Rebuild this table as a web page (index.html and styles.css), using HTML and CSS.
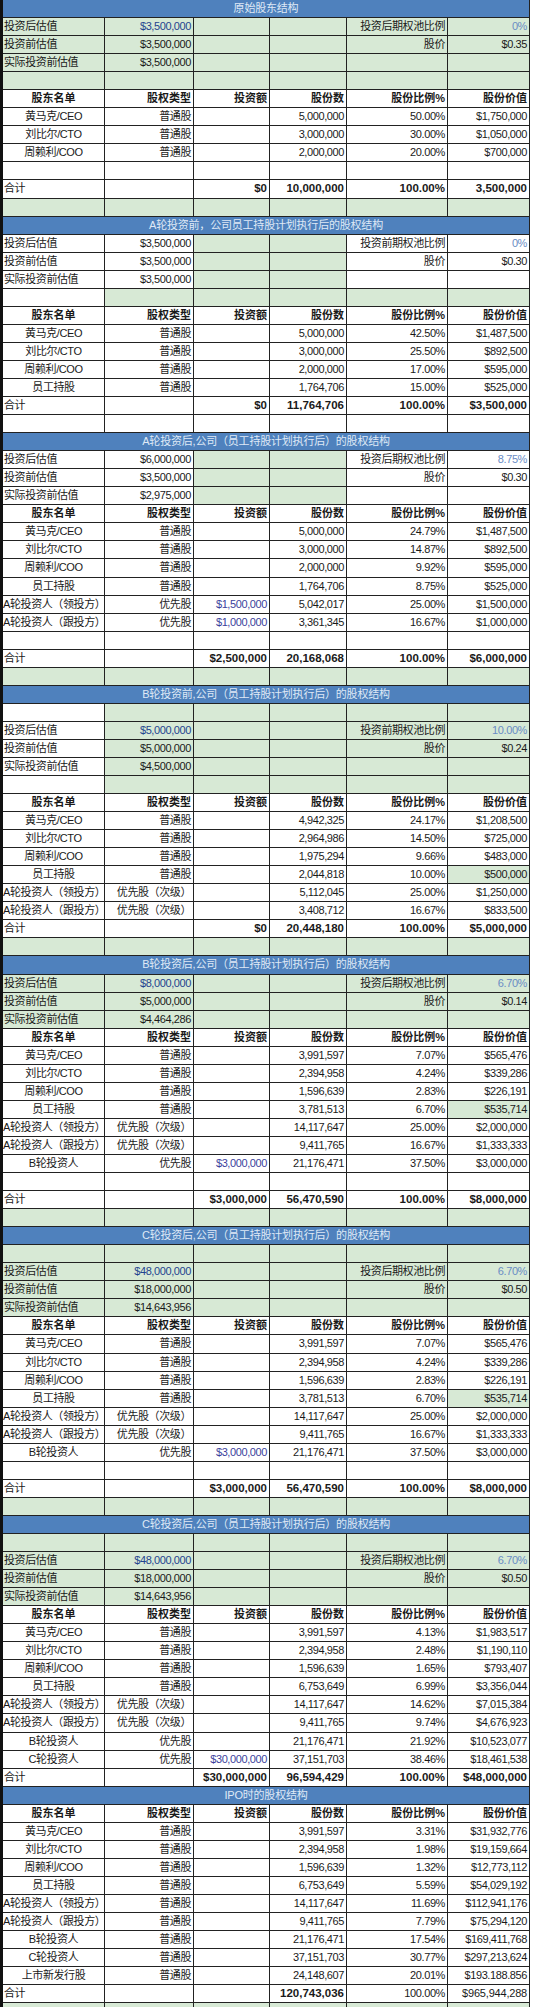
FILE: index.html
```html
<!DOCTYPE html>
<html lang="zh">
<head>
<meta charset="utf-8">
<title>股权结构</title>
<link rel="stylesheet" href="styles.css">
</head>
<body>
<div class="sheet">

<!-- Section 1 -->
<div class="title">原始股东结构</div>
<div class="row g"><span class="l">投资后估值</span><span class="db">$3,500,000</span><span></span><span></span><span>投资后期权池比例</span><span class="lb">0%</span></div>
<div class="row g"><span class="l">投资前估值</span><span>$3,500,000</span><span></span><span></span><span>股价</span><span>$0.35</span></div>
<div class="row g"><span class="l">实际投资前估值</span><span>$3,500,000</span><span></span><span></span><span></span><span></span></div>
<div class="row g"><span></span><span></span><span></span><span></span><span></span><span></span></div>
<div class="row hd"><span class="c">股东名单</span><span>股权类型</span><span>投资额</span><span>股份数</span><span>股份比例%</span><span>股份价值</span></div>
<div class="row"><span class="c">黄马克/CEO</span><span>普通股</span><span></span><span>5,000,000</span><span>50.00%</span><span>$1,750,000</span></div>
<div class="row"><span class="c">刘比尔/CTO</span><span>普通股</span><span></span><span>3,000,000</span><span>30.00%</span><span>$1,050,000</span></div>
<div class="row"><span class="c">周赖利/COO</span><span>普通股</span><span></span><span>2,000,000</span><span>20.00%</span><span>$700,000</span></div>
<div class="row"><span></span><span></span><span></span><span></span><span></span><span></span></div>
<div class="row tot"><span class="l">合计</span><span></span><span class="b">$0</span><span class="b">10,000,000</span><span class="b">100.00%</span><span class="b">3,500,000</span></div>
<div class="row g"><span></span><span></span><span></span><span></span><span></span><span></span></div>

<!-- Section 2 -->
<div class="title">A轮投资前，公司员工持股计划执行后的股权结构</div>
<div class="row"><span class="l">投资后估值</span><span>$3,500,000</span><span class="g"></span><span class="g"></span><span>投资前期权池比例</span><span class="lb">0%</span></div>
<div class="row"><span class="l">投资前估值</span><span>$3,500,000</span><span class="g"></span><span class="g"></span><span>股价</span><span>$0.30</span></div>
<div class="row"><span class="l">实际投资前估值</span><span>$3,500,000</span><span class="g"></span><span class="g"></span><span></span><span></span></div>
<div class="row g"><span class="w"></span><span></span><span></span><span></span><span></span><span></span></div>
<div class="row hd"><span class="c">股东名单</span><span>股权类型</span><span>投资额</span><span>股份数</span><span>股份比例%</span><span>股份价值</span></div>
<div class="row"><span class="c">黄马克/CEO</span><span>普通股</span><span></span><span>5,000,000</span><span>42.50%</span><span>$1,487,500</span></div>
<div class="row"><span class="c">刘比尔/CTO</span><span>普通股</span><span></span><span>3,000,000</span><span>25.50%</span><span>$892,500</span></div>
<div class="row"><span class="c">周赖利/COO</span><span>普通股</span><span></span><span>2,000,000</span><span>17.00%</span><span>$595,000</span></div>
<div class="row"><span class="c">员工持股</span><span>普通股</span><span></span><span>1,764,706</span><span>15.00%</span><span>$525,000</span></div>
<div class="row tot"><span class="l">合计</span><span></span><span class="b">$0</span><span class="b">11,764,706</span><span class="b">100.00%</span><span class="b">$3,500,000</span></div>
<div class="row"><span></span><span></span><span></span><span></span><span></span><span></span></div>

<!-- Section 3 -->
<div class="title">A轮投资后,公司（员工持股计划执行后）的股权结构</div>
<div class="row"><span class="l">投资后估值</span><span>$6,000,000</span><span class="g"></span><span class="g"></span><span>投资后期权池比例</span><span class="lb">8.75%</span></div>
<div class="row"><span class="l">投资前估值</span><span>$3,500,000</span><span class="g"></span><span class="g"></span><span>股价</span><span>$0.30</span></div>
<div class="row"><span class="l">实际投资前估值</span><span>$2,975,000</span><span class="g"></span><span class="g"></span><span></span><span></span></div>
<div class="row hd"><span class="c">股东名单</span><span>股权类型</span><span>投资额</span><span>股份数</span><span>股份比例%</span><span>股份价值</span></div>
<div class="row"><span class="c">黄马克/CEO</span><span>普通股</span><span></span><span>5,000,000</span><span>24.79%</span><span>$1,487,500</span></div>
<div class="row"><span class="c">刘比尔/CTO</span><span>普通股</span><span></span><span>3,000,000</span><span>14.87%</span><span>$892,500</span></div>
<div class="row"><span class="c">周赖利/COO</span><span>普通股</span><span></span><span>2,000,000</span><span>9.92%</span><span>$595,000</span></div>
<div class="row"><span class="c">员工持股</span><span>普通股</span><span></span><span>1,764,706</span><span>8.75%</span><span>$525,000</span></div>
<div class="row"><span class="c">A轮投资人（领投方）</span><span>优先股</span><span class="pb">$1,500,000</span><span>5,042,017</span><span>25.00%</span><span>$1,500,000</span></div>
<div class="row"><span class="c">A轮投资人（跟投方）</span><span>优先股</span><span class="pb">$1,000,000</span><span>3,361,345</span><span>16.67%</span><span>$1,000,000</span></div>
<div class="row"><span></span><span></span><span></span><span></span><span></span><span></span></div>
<div class="row tot"><span class="l">合计</span><span></span><span class="b">$2,500,000</span><span class="b">20,168,068</span><span class="b">100.00%</span><span class="b">$6,000,000</span></div>
<div class="row g"><span></span><span></span><span></span><span></span><span></span><span></span></div>

<!-- Section 4 -->
<div class="title">B轮投资前,公司（员工持股计划执行后）的股权结构</div>
<div class="row g"><span class="w"></span><span></span><span></span><span></span><span></span><span></span></div>
<div class="row g"><span class="l w">投资后估值</span><span class="db">$5,000,000</span><span></span><span></span><span>投资前期权池比例</span><span class="lb">10.00%</span></div>
<div class="row g"><span class="l w">投资前估值</span><span>$5,000,000</span><span></span><span></span><span>股价</span><span>$0.24</span></div>
<div class="row g"><span class="l w">实际投资前估值</span><span>$4,500,000</span><span></span><span></span><span></span><span></span></div>
<div class="row g"><span class="w"></span><span></span><span></span><span></span><span></span><span></span></div>
<div class="row hd"><span class="c">股东名单</span><span>股权类型</span><span>投资额</span><span>股份数</span><span>股份比例%</span><span>股份价值</span></div>
<div class="row"><span class="c">黄马克/CEO</span><span>普通股</span><span></span><span>4,942,325</span><span>24.17%</span><span>$1,208,500</span></div>
<div class="row"><span class="c">刘比尔/CTO</span><span>普通股</span><span></span><span>2,964,986</span><span>14.50%</span><span>$725,000</span></div>
<div class="row"><span class="c">周赖利/COO</span><span>普通股</span><span></span><span>1,975,294</span><span>9.66%</span><span>$483,000</span></div>
<div class="row"><span class="c">员工持股</span><span>普通股</span><span></span><span>2,044,818</span><span>10.00%</span><span class="g">$500,000</span></div>
<div class="row"><span class="c">A轮投资人（领投方）</span><span>优先股（次级）</span><span></span><span>5,112,045</span><span>25.00%</span><span>$1,250,000</span></div>
<div class="row"><span class="c">A轮投资人（跟投方）</span><span>优先股（次级）</span><span></span><span>3,408,712</span><span>16.67%</span><span>$833,500</span></div>
<div class="row tot"><span class="l">合计</span><span></span><span class="b">$0</span><span class="b">20,448,180</span><span class="b">100.00%</span><span class="b">$5,000,000</span></div>
<div class="row g"><span></span><span></span><span></span><span></span><span></span><span></span></div>

<!-- Section 5 -->
<div class="title">B轮投资后,公司（员工持股计划执行后）的股权结构</div>
<div class="row g"><span class="l">投资后估值</span><span class="db">$8,000,000</span><span></span><span></span><span>投资后期权池比例</span><span class="lb">6.70%</span></div>
<div class="row g"><span class="l">投资前估值</span><span>$5,000,000</span><span></span><span></span><span>股价</span><span>$0.14</span></div>
<div class="row g"><span class="l">实际投资前估值</span><span>$4,464,286</span><span></span><span></span><span></span><span></span></div>
<div class="row hd"><span class="c">股东名单</span><span>股权类型</span><span>投资额</span><span>股份数</span><span>股份比例%</span><span>股份价值</span></div>
<div class="row"><span class="c">黄马克/CEO</span><span>普通股</span><span></span><span>3,991,597</span><span>7.07%</span><span>$565,476</span></div>
<div class="row"><span class="c">刘比尔/CTO</span><span>普通股</span><span></span><span>2,394,958</span><span>4.24%</span><span>$339,286</span></div>
<div class="row"><span class="c">周赖利/COO</span><span>普通股</span><span></span><span>1,596,639</span><span>2.83%</span><span>$226,191</span></div>
<div class="row"><span class="c">员工持股</span><span>普通股</span><span></span><span>3,781,513</span><span>6.70%</span><span class="g">$535,714</span></div>
<div class="row"><span class="c">A轮投资人（领投方）</span><span>优先股（次级）</span><span></span><span>14,117,647</span><span>25.00%</span><span>$2,000,000</span></div>
<div class="row"><span class="c">A轮投资人（跟投方）</span><span>优先股（次级）</span><span></span><span>9,411,765</span><span>16.67%</span><span>$1,333,333</span></div>
<div class="row"><span class="c">B轮投资人</span><span>优先股</span><span class="pb">$3,000,000</span><span>21,176,471</span><span>37.50%</span><span>$3,000,000</span></div>
<div class="row"><span></span><span></span><span></span><span></span><span></span><span></span></div>
<div class="row tot"><span class="l">合计</span><span></span><span class="b">$3,000,000</span><span class="b">56,470,590</span><span class="b">100.00%</span><span class="b">$8,000,000</span></div>
<div class="row g"><span></span><span></span><span></span><span></span><span></span><span></span></div>

<!-- Section 6 -->
<div class="title">C轮投资后,公司（员工持股计划执行后）的股权结构</div>
<div class="row g"><span></span><span></span><span></span><span></span><span></span><span></span></div>
<div class="row g"><span class="l">投资后估值</span><span class="db">$48,000,000</span><span></span><span></span><span>投资后期权池比例</span><span class="lb">6.70%</span></div>
<div class="row g"><span class="l">投资前估值</span><span>$18,000,000</span><span></span><span></span><span>股价</span><span>$0.50</span></div>
<div class="row g"><span class="l">实际投资前估值</span><span>$14,643,956</span><span></span><span></span><span></span><span></span></div>
<div class="row hd"><span class="c">股东名单</span><span>股权类型</span><span>投资额</span><span>股份数</span><span>股份比例%</span><span>股份价值</span></div>
<div class="row"><span class="c">黄马克/CEO</span><span>普通股</span><span></span><span>3,991,597</span><span>7.07%</span><span>$565,476</span></div>
<div class="row"><span class="c">刘比尔/CTO</span><span>普通股</span><span></span><span>2,394,958</span><span>4.24%</span><span>$339,286</span></div>
<div class="row"><span class="c">周赖利/COO</span><span>普通股</span><span></span><span>1,596,639</span><span>2.83%</span><span>$226,191</span></div>
<div class="row"><span class="c">员工持股</span><span>普通股</span><span></span><span>3,781,513</span><span>6.70%</span><span class="g">$535,714</span></div>
<div class="row"><span class="c">A轮投资人（领投方）</span><span>优先股（次级）</span><span></span><span>14,117,647</span><span>25.00%</span><span>$2,000,000</span></div>
<div class="row"><span class="c">A轮投资人（跟投方）</span><span>优先股（次级）</span><span></span><span>9,411,765</span><span>16.67%</span><span>$1,333,333</span></div>
<div class="row"><span class="c">B轮投资人</span><span>优先股</span><span class="pb">$3,000,000</span><span>21,176,471</span><span>37.50%</span><span>$3,000,000</span></div>
<div class="row"><span></span><span></span><span></span><span></span><span></span><span></span></div>
<div class="row tot"><span class="l">合计</span><span></span><span class="b">$3,000,000</span><span class="b">56,470,590</span><span class="b">100.00%</span><span class="b">$8,000,000</span></div>
<div class="row g"><span></span><span></span><span></span><span></span><span></span><span></span></div>

<!-- Section 7 -->
<div class="title">C轮投资后,公司（员工持股计划执行后）的股权结构</div>
<div class="row g"><span></span><span></span><span></span><span></span><span></span><span></span></div>
<div class="row g"><span class="l">投资后估值</span><span class="db">$48,000,000</span><span></span><span></span><span>投资后期权池比例</span><span class="lb">6.70%</span></div>
<div class="row g"><span class="l">投资前估值</span><span>$18,000,000</span><span></span><span></span><span>股价</span><span>$0.50</span></div>
<div class="row g"><span class="l">实际投资前估值</span><span>$14,643,956</span><span></span><span></span><span></span><span></span></div>
<div class="row hd"><span class="c">股东名单</span><span>股权类型</span><span>投资额</span><span>股份数</span><span>股份比例%</span><span>股份价值</span></div>
<div class="row"><span class="c">黄马克/CEO</span><span>普通股</span><span></span><span>3,991,597</span><span>4.13%</span><span>$1,983,517</span></div>
<div class="row"><span class="c">刘比尔/CTO</span><span>普通股</span><span></span><span>2,394,958</span><span>2.48%</span><span>$1,190,110</span></div>
<div class="row"><span class="c">周赖利/COO</span><span>普通股</span><span></span><span>1,596,639</span><span>1.65%</span><span>$793,407</span></div>
<div class="row"><span class="c">员工持股</span><span>普通股</span><span></span><span>6,753,649</span><span>6.99%</span><span>$3,356,044</span></div>
<div class="row"><span class="c">A轮投资人（领投方）</span><span>优先股（次级）</span><span></span><span>14,117,647</span><span>14.62%</span><span>$7,015,384</span></div>
<div class="row"><span class="c">A轮投资人（跟投方）</span><span>优先股（次级）</span><span></span><span>9,411,765</span><span>9.74%</span><span>$4,676,923</span></div>
<div class="row"><span class="c">B轮投资人</span><span>优先股</span><span></span><span>21,176,471</span><span>21.92%</span><span>$10,523,077</span></div>
<div class="row"><span class="c">C轮投资人</span><span>优先股</span><span class="pb">$30,000,000</span><span>37,151,703</span><span>38.46%</span><span>$18,461,538</span></div>
<div class="row tot"><span class="l">合计</span><span></span><span class="b">$30,000,000</span><span class="b">96,594,429</span><span class="b">100.00%</span><span class="b">$48,000,000</span></div>

<!-- IPO -->
<div class="title">IPO时的股权结构</div>
<div class="row hd"><span class="c">股东名单</span><span>股权类型</span><span>投资额</span><span>股份数</span><span>股份比例%</span><span>股份价值</span></div>
<div class="row"><span class="c">黄马克/CEO</span><span>普通股</span><span></span><span>3,991,597</span><span>3.31%</span><span>$31,932,776</span></div>
<div class="row"><span class="c">刘比尔/CTO</span><span>普通股</span><span></span><span>2,394,958</span><span>1.98%</span><span>$19,159,664</span></div>
<div class="row"><span class="c">周赖利/COO</span><span>普通股</span><span></span><span>1,596,639</span><span>1.32%</span><span>$12,773,112</span></div>
<div class="row"><span class="c">员工持股</span><span>普通股</span><span></span><span>6,753,649</span><span>5.59%</span><span>$54,029,192</span></div>
<div class="row"><span class="c">A轮投资人（领投方）</span><span>普通股</span><span></span><span>14,117,647</span><span>11.69%</span><span>$112,941,176</span></div>
<div class="row"><span class="c">A轮投资人（跟投方）</span><span>普通股</span><span></span><span>9,411,765</span><span>7.79%</span><span>$75,294,120</span></div>
<div class="row"><span class="c">B轮投资人</span><span>普通股</span><span></span><span>21,176,471</span><span>17.54%</span><span>$169,411,768</span></div>
<div class="row"><span class="c">C轮投资人</span><span>普通股</span><span></span><span>37,151,703</span><span>30.77%</span><span>$297,213,624</span></div>
<div class="row"><span class="c">上市新发行股</span><span>普通股</span><span></span><span>24,148,607</span><span>20.01%</span><span>$193.188.856</span></div>
<div class="row tot"><span class="l">合计</span><span></span><span></span><span class="b">120,743,036</span><span>100.00%</span><span class="m">$965,944,288</span></div>
<div class="row g"><span></span><span></span><span></span><span></span><span></span><span></span></div>

</div>
</body>
</html>
```

FILE: styles.css
```css
html, body {
  margin: 0;
  padding: 0;
  background: #ffffff;
}

body {
  font-family: "Liberation Sans", "Noto Sans CJK SC", sans-serif;
  font-size: 11px;
  color: #1a1a1a;
}

.sheet {
  width: 527px;
  border-left: 3px solid #111;
  display: flex;
  flex-direction: column;
  overflow: hidden;
  height: 2007px;
}

.title {
  flex: 0 0 18.05px;
  box-sizing: border-box;
  background: #4f81bd;
  color: #dfe9f6;
  text-align: center;
  line-height: 17px;
  border-right: 1px solid #222;
  border-bottom: 1px solid #222;
  letter-spacing: -0.2px;
}

.row {
  flex: 0 0 18.05px;
  display: grid;
  grid-template-columns: 102px 89px 76px 77px 101px 82px;
}

.row > span {
  box-sizing: border-box;
  border-right: 1px solid #222;
  border-bottom: 1px solid #222;
  padding: 0 2px;
  line-height: 17px;
  white-space: nowrap;
  text-align: right;
  letter-spacing: -0.4px;
  background: #ffffff;
}

.row.g > span,
.row > span.g {
  background: #d7e9d5;
}

.row > span.w {
  background: #ffffff;
}

.row > span.l {
  text-align: left;
  padding-left: 1px;
}

.row > span.c {
  text-align: center;
  padding: 0;
  overflow: visible;
}

.row.hd > span {
  font-weight: bold;
  letter-spacing: 0;
}

.row > span.b {
  font-weight: bold;
  font-size: 11.5px;
  letter-spacing: 0;
}

.row > span.m {
  letter-spacing: -0.2px;
}

.db {
  color: #24448f;
}

.lb {
  color: #6a8cc4;
}

.pb {
  color: #3c3f9c;
}
```
